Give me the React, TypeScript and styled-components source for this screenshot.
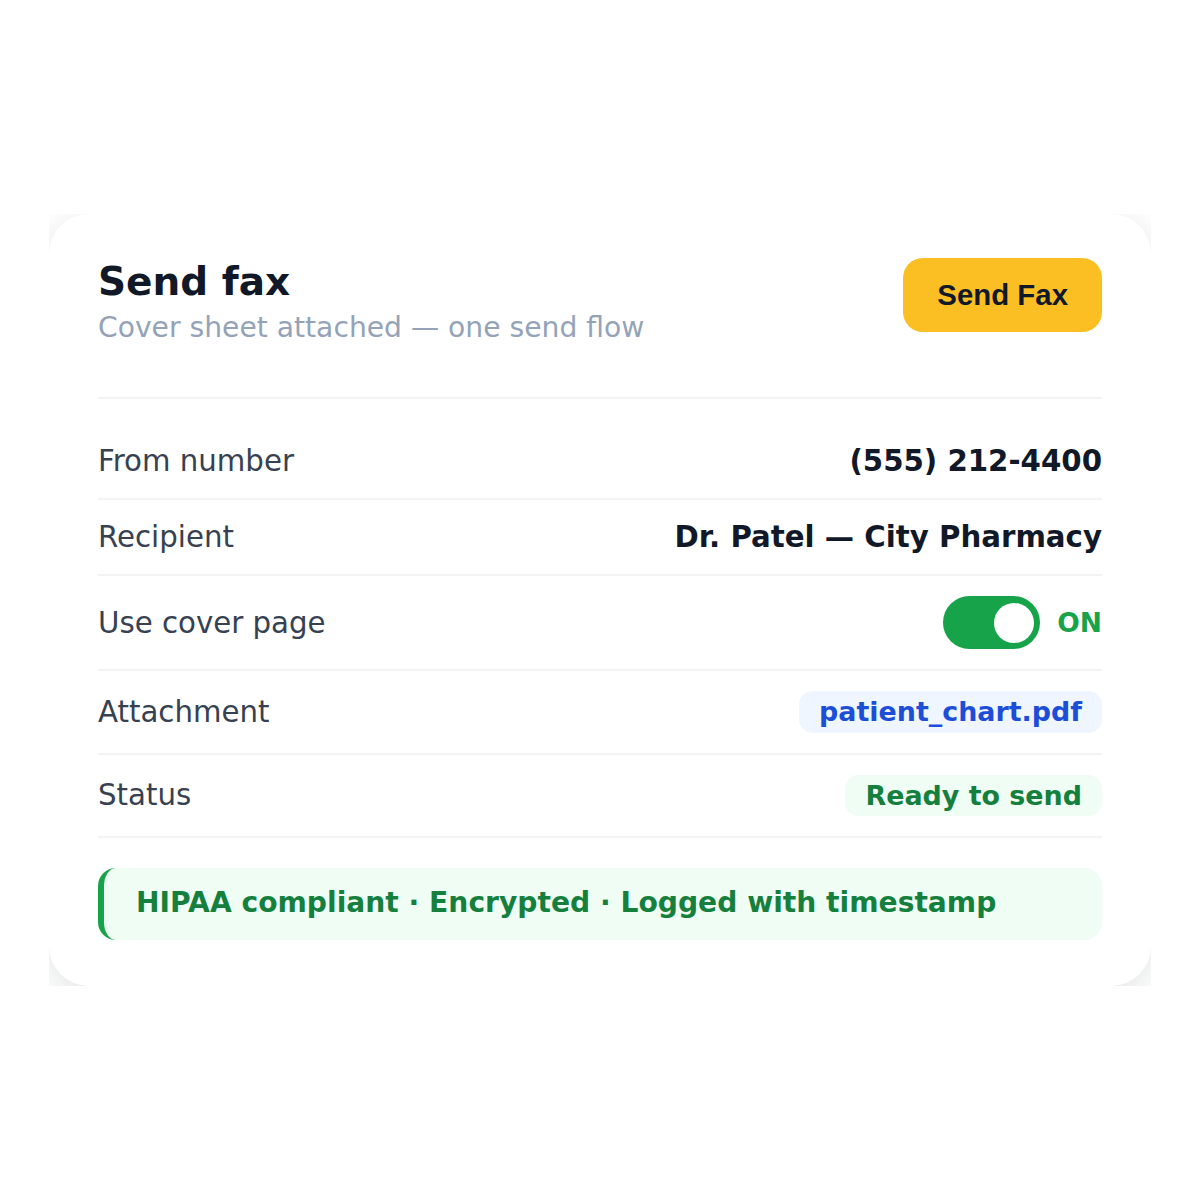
import { createGlobalStyle, styled } from "styled-components";

const GlobalStyle = createGlobalStyle`
  body {
    margin: 0;
    background: #ffffff;
    font-family: "DejaVu Sans", "Noto Sans", sans-serif;
  }
`

// clips the card shadow to the card's box, as in the reference
const Frame = styled.div`
  width: 1102px;
  margin: 214px auto 0;
  overflow: hidden;
`

const Card = styled.section`
  background: #ffffff;
  border-radius: 40px;
  box-shadow: 0 8px 32px rgba(15, 23, 42, 0.12);
  padding: 45px 49px 46px;
`

const Header = styled.header`
  display: flex;
  justify-content: space-between;
  align-items: flex-start;
  padding-bottom: 52px;
  border-bottom: 2px solid #f1f3f5;
`

const Title = styled.h1`
  margin: 0;
  font-size: 39px;
  line-height: 1.164;
  font-weight: 700;
  color: #111827;
`

const Subtitle = styled.p`
  margin: 8px 0 0;
  font-size: 28.2px;
  line-height: 1.164;
  color: #94a3b8;
`

const SendButton = styled.button`
  margin-top: -1px;
  border: none;
  border-radius: 20px;
  background: #fbbf24;
  color: #111827;
  font-family: "Liberation Sans", Arial, sans-serif;
  font-weight: 700;
  font-size: 29.4px;
  padding: 20px 34px;
  cursor: pointer;
`

const List = styled.div`
  padding-top: 25px;
`

const Row = styled.div`
  display: flex;
  justify-content: space-between;
  align-items: center;
  padding: 20px 0;
  border-bottom: 2px solid #f1f3f5;
`

const Label = styled.span`
  font-size: 29.25px;
  line-height: 1.164;
  color: #374151;
`

const Value = styled.span`
  font-size: 29.25px;
  line-height: 1.164;
  font-weight: 700;
  color: #111827;
`

const Pill = styled.span<{ $tone: "blue" | "green" }>`
  font-size: 26.9px;
  line-height: 1.164;
  font-weight: 700;
  padding: 5px 20px;
  border-radius: 14px;
  color: ${p => (p.$tone === "blue" ? "#1d4ed8" : "#15803d")};
  background: ${p => (p.$tone === "blue" ? "#eff6ff" : "#f0fdf4")};
`

const ToggleWrap = styled.div`
  display: flex;
  align-items: center;
  gap: 17px;
`

const Track = styled.div<{ $on: boolean }>`
  width: 97px;
  height: 53px;
  border-radius: 27px;
  background: ${p => (p.$on ? "#16a34a" : "#d1d5db")};
  display: flex;
  align-items: center;
  justify-content: ${p => (p.$on ? "flex-end" : "flex-start")};
  padding: 0 6.5px;
  box-sizing: border-box;
`

const Knob = styled.div`
  width: 40px;
  height: 40px;
  border-radius: 50%;
  background: #ffffff;
`

const ToggleText = styled.span`
  font-size: 26.5px;
  font-weight: 700;
  color: #16a34a;
`

const Banner = styled.div`
  margin-top: 30px;
  padding: 19.5px 32px;
  border-left: 6px solid #16a34a;
  border-radius: 18px;
  background: #f0fdf4;
  color: #15803d;
  font-size: 28.16px;
  line-height: 1.164;
  font-weight: 700;
`

export default function App() {
    return (
        <>
            <GlobalStyle/>
            <Frame>
                <Card>
                    <Header>
                        <div>
                            <Title>Send fax</Title>
                            <Subtitle>Cover sheet attached — one send flow</Subtitle>
                        </div>
                        <SendButton>Send Fax</SendButton>
                    </Header>

                    <List>
                        <Row>
                            <Label>From number</Label>
                            <Value>(555) 212-4400</Value>
                        </Row>
                        <Row>
                            <Label>Recipient</Label>
                            <Value>Dr. Patel — City Pharmacy</Value>
                        </Row>
                        <Row>
                            <Label>Use cover page</Label>
                            <ToggleWrap>
                                <Track $on={true}><Knob/></Track>
                                <ToggleText>ON</ToggleText>
                            </ToggleWrap>
                        </Row>
                        <Row>
                            <Label>Attachment</Label>
                            <Pill $tone="blue">patient_chart.pdf</Pill>
                        </Row>
                        <Row>
                            <Label>Status</Label>
                            <Pill $tone="green">Ready to send</Pill>
                        </Row>
                    </List>

                    <Banner>HIPAA compliant · Encrypted · Logged with timestamp</Banner>
                </Card>
            </Frame>
        </>
    )
}
